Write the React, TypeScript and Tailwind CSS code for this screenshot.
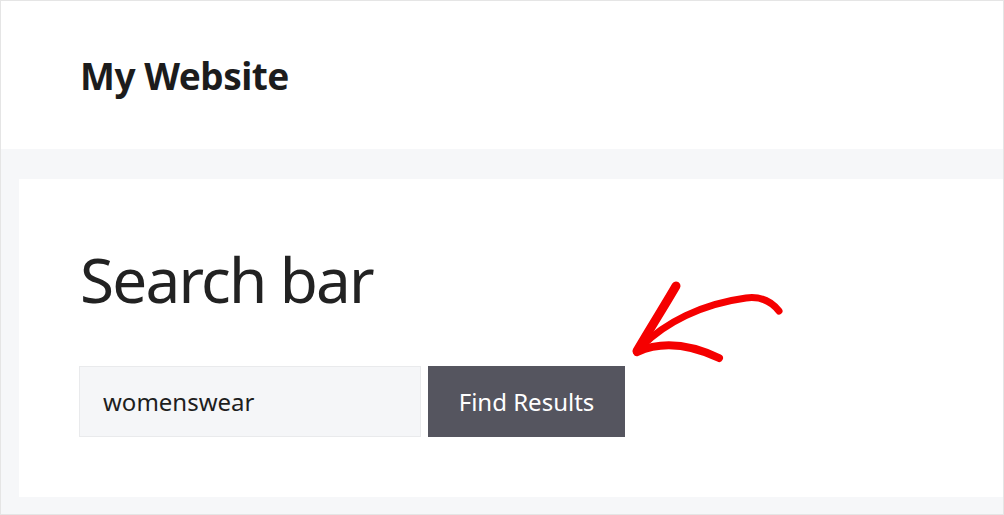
export default function App() {
  return (
    <div className="relative w-[1004px] h-[515px] border border-[#e5e5e5] bg-[#f6f7f9] flex flex-col font-['Noto_Sans',sans-serif] overflow-hidden">
      {/* Site header */}
      <header className="h-[148px] bg-white flex items-center pl-[79px] shrink-0">
        <h1 className="text-[37px] leading-none font-bold text-[#1c1c1c] tracking-[-0.5px]">My Website</h1>
      </header>

      {/* Content card */}
      <main className="mt-[30px] ml-[18px] h-[318px] bg-white pl-[60px] pt-[69px] shrink-0">
        <h2 className="text-[62px] leading-none font-normal text-[#222] tracking-[-1.8px] pl-px">Search bar</h2>
        <form className="flex gap-[7px] mt-[56px]" onSubmit={(e) => e.preventDefault()}>
          <input
            type="text"
            defaultValue="womenswear"
            className="w-[342px] h-[71px] bg-[#f5f6f8] border border-[#e9eaec] px-[23px] text-[24px] text-[#1e1e1e] outline-none"
          />
          <button type="submit" className="w-[197px] h-[71px] bg-[#55555f] text-white text-[24px]">
            Find Results
          </button>
        </form>
      </main>

      {/* Hand-drawn arrow */}
      <svg
        className="absolute left-[620px] top-[270px] w-[180px] h-[110px] pointer-events-none"
        viewBox="0 0 180 110"
        fill="none"
        stroke="#f50000"
        strokeLinecap="round"
        strokeLinejoin="round"
      >
        <path d="M55 15 C44 34 30 56 16 80" strokeWidth="9" />
        <path d="M21 75 C44 52 80 33 125 27 C140 25 150 30 158 40" strokeWidth="7" />
        <path d="M16 81 C36 72 62 70 98 87" strokeWidth="8" />
      </svg>
    </div>
  );
}
